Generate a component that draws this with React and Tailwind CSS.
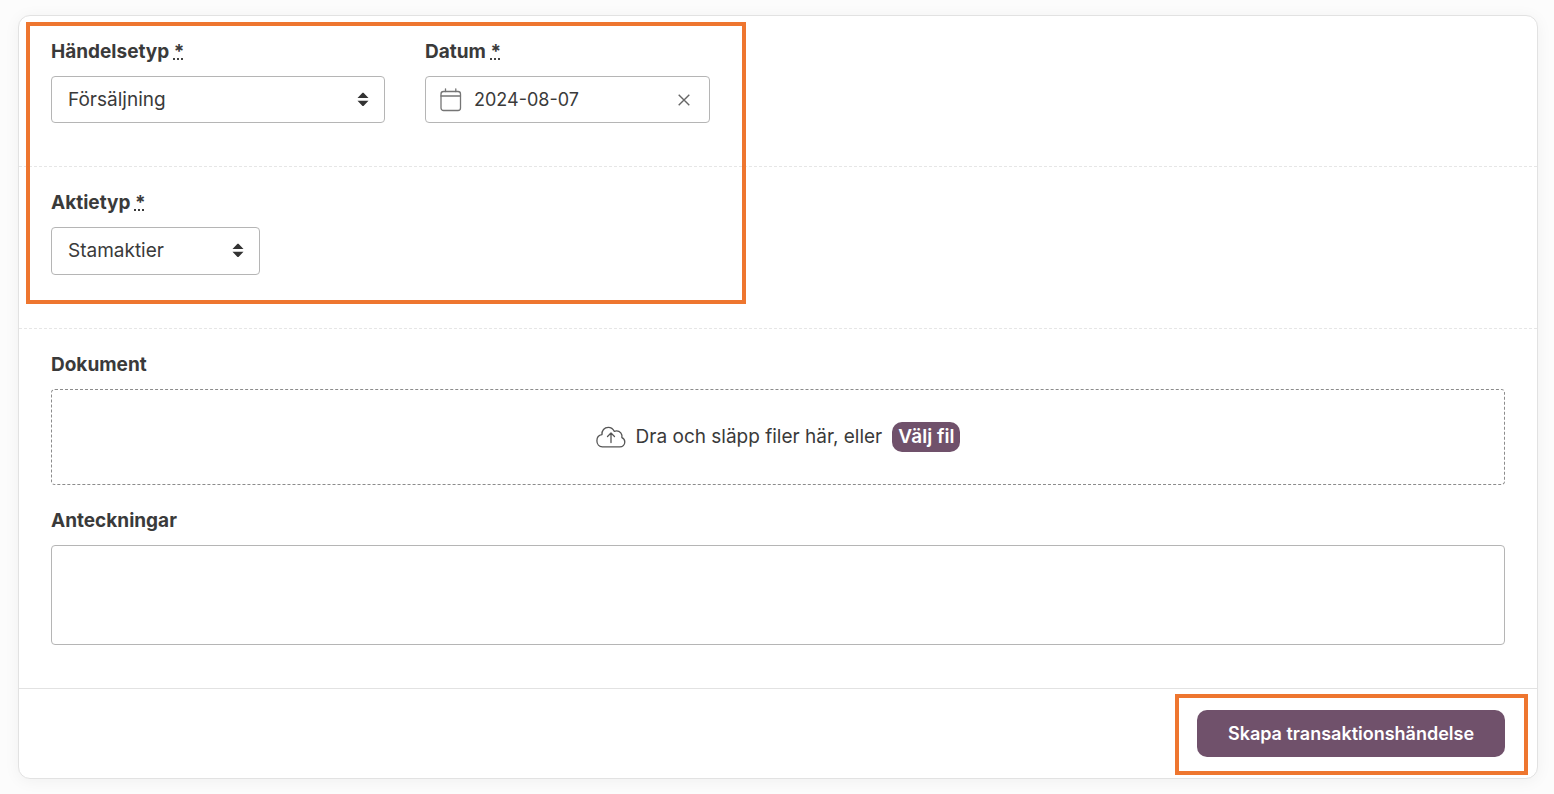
import React, { useRef, useState } from 'react';

const inputBorder = 'border border-[#b5b5b5] rounded-sm bg-white';

const CalendarIcon = () => (
  <svg className="w-6 h-6 shrink-0" viewBox="0 0 24 24" fill="none" stroke="#757575" strokeLinecap="round" aria-hidden="true">
    <rect x="2" y="3.5" width="19.5" height="19" rx="2.5" strokeWidth="1.3" />
    <path d="M2 8h19.5M6.5 0.8v2.7M16.8 0.8v2.7" strokeWidth="1.3" />
  </svg>
);

const CloudUploadIcon = () => (
  <svg className="w-[30px] h-[22px] shrink-0" viewBox="0 0 30 22" fill="none" stroke="#555" strokeWidth="1.3" strokeLinecap="round" strokeLinejoin="round" aria-hidden="true">
    <path d="M6.3 20.8h17.5c2.8 0 5-2.1 5-4.8 0-2.1-1.1-3.7-2.9-4.4.7-3.7-1.9-6.8-5.3-6.8-.9 0-1.7.2-2.4.5C17 2.7 14.9 1.4 12.3 1.4 8.3 1.400 5.600 4.600 6 8.600 3 9 .9 11.500.9 14.700c0 3.700 2.300 6.100 5.400 6.100z" />
    <path d="M15 16.5V7M11.500 10.500L15 7l3.500 3.500" />
  </svg>
);

const CloseIcon = () => (
  <svg className="w-3 h-3" viewBox="0 0 12 12" fill="none" stroke="#666" strokeWidth="1.4" aria-hidden="true">
    <path d="M0.7 0.7l10.6 10.6M11.3 0.7L0.7 11.3" />
  </svg>
);

const SortIcon = () => (
  <svg className="w-3 h-[14px] absolute right-4 top-4 pointer-events-none" viewBox="0 0 12 14" fill="#333" aria-hidden="true">
    <path d="M5.500 0.800h1L11.500 6H0.500zM5.500 14h1L11.500 8.800H0.500z" />
  </svg>
);

const FieldLabel = ({ htmlFor, required, children }) => (
  <label htmlFor={htmlFor} className="block mb-3 leading-6 font-bold">
    {children}
    {required && (
      <>
        {' '}
        <abbr title="obligatoriskt">*</abbr>
      </>
    )}
  </label>
);

const SelectField = ({ id, options, className }) => (
  <div className={`relative ${className}`}>
    <select id={id} className={`appearance-none w-full h-full pl-4 pr-10 ${inputBorder}`}>
      {options.map((option) => (
        <option key={option}>{option}</option>
      ))}
    </select>
    <SortIcon />
  </div>
);

const App = () => {
  const [date, setDate] = useState('2024-08-07');
  const fileInput = useRef(null);

  return (
    <main className="min-h-screen bg-[#fcfcfc] pt-[15px] pb-4 pl-[18px] pr-4 font-['Inter',sans-serif] text-[19px] leading-6 text-[#3a3a3a]">
      <form
        className="relative bg-white border border-[#e2e2e2] rounded-xl shadow-[0_2px_16px_rgba(0,0,0,0.05)]"
        onSubmit={(e) => e.preventDefault()}
      >
        {/* Event type and date */}
        <section className="flex gap-10 px-8 pt-6 pb-[43px] border-b border-dashed border-[#e6e6e6]">
          <div>
            <FieldLabel htmlFor="event-type" required>Händelsetyp</FieldLabel>
            <SelectField id="event-type" options={['Försäljning', 'Köp', 'Gåva']} className="w-[334px] h-[47px]" />
          </div>
          <div>
            <FieldLabel htmlFor="date" required>Datum</FieldLabel>
            <div className={`flex items-center w-[285px] h-[47px] pl-[13px] pr-[19px] ${inputBorder}`}>
              <CalendarIcon />
              <input
                id="date"
                type="text"
                value={date}
                onChange={(e) => setDate(e.target.value)}
                className="flex-1 min-w-0 ml-[11px] text-[18px] outline-none"
              />
              <button type="button" aria-label="Rensa datum" onClick={() => setDate('')}>
                <CloseIcon />
              </button>
            </div>
          </div>
        </section>

        {/* Share type */}
        <section className="px-8 pt-6 pb-[53px] border-b border-dashed border-[#e6e6e6]">
          <FieldLabel htmlFor="share-type" required>Aktietyp</FieldLabel>
          <SelectField id="share-type" options={['Stamaktier', 'Preferensaktier']} className="w-[209px] h-12" />
        </section>

        {/* Documents and notes */}
        <section className="px-8 pt-6 pb-[43px] border-b border-[#e2e2e2]">
          <FieldLabel htmlFor="documents">Dokument</FieldLabel>
          <div className="flex items-center justify-center h-24 mb-6 border border-dashed border-[#8c8c8c] rounded-sm">
            <CloudUploadIcon />
            <span className="mx-[10px]">Dra och släpp filer här, eller</span>
            <input ref={fileInput} id="documents" type="file" multiple className="hidden" />
            <button
              type="button"
              onClick={() => fileInput.current.click()}
              className="h-[30px] px-[6px] rounded-[10px] bg-[#70516b] text-white font-semibold"
            >
              Välj fil
            </button>
          </div>
          <FieldLabel htmlFor="notes">Anteckningar</FieldLabel>
          <textarea id="notes" className={`block w-full h-[100px] px-4 py-3 resize-none ${inputBorder}`} />
        </section>

        <footer className="relative flex justify-end px-8 py-[21px]">
          <button type="submit" className="w-[308px] h-[47px] rounded-[10px] bg-[#70516b] text-[18px] text-white font-semibold">
            Skapa transaktionshändelse
          </button>
          <div className="absolute right-[9px] top-[5px] w-[353px] h-[81px] border-4 border-[#ee762f] pointer-events-none" />
        </footer>

        {/* Highlight around the required fields */}
        <div className="absolute left-[7px] top-[6px] w-[720px] h-[282px] border-4 border-[#ee762f] pointer-events-none" />
      </form>
    </main>
  );
};

export default App;
